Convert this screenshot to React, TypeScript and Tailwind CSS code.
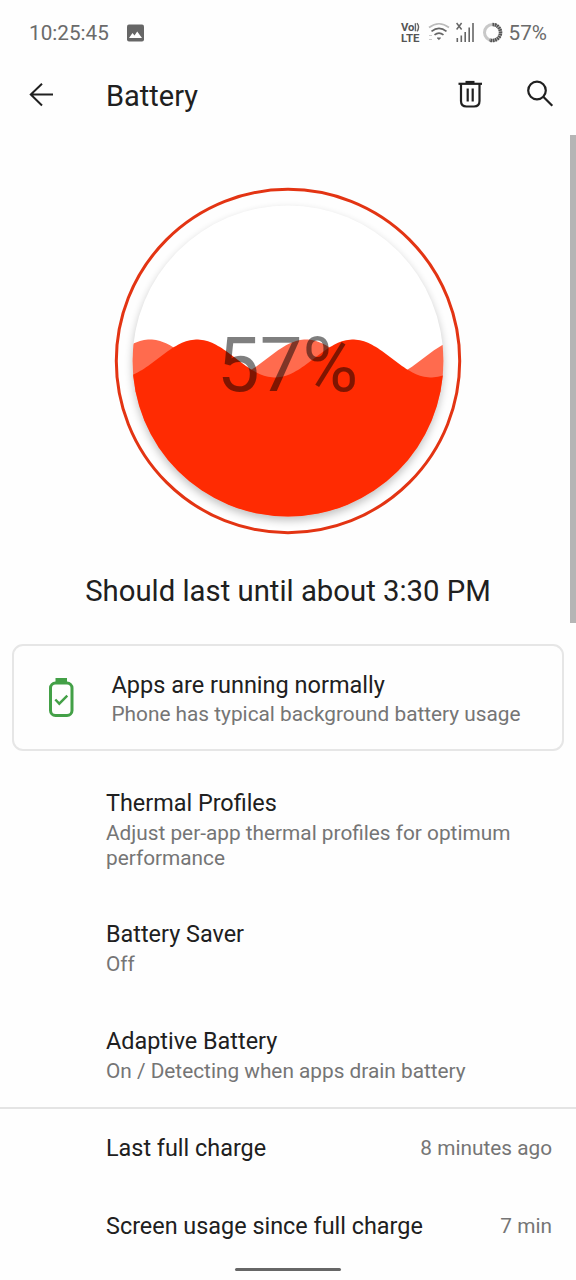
const preferences = [
  { title: "Thermal Profiles", summary: "Adjust per-app thermal profiles for optimum performance", size: "h-[131px]" },
  { title: "Battery Saver", summary: "Off", size: "h-[107px]" },
  { title: "Adaptive Battery", summary: "On / Detecting when apps drain battery", size: "h-[81px]" },
];

const usage = [
  { label: "Last full charge", value: "8 minutes ago" },
  { label: "Screen usage since full charge", value: "7 min" },
];

// one crest every 156px, 19px high on either side of the water line
function wavePath(crest: number) {
  const points: string[] = [];
  for (let x = 128; x <= 448; x += 2) {
    const y = 358.5 - 19 * Math.cos(((x - crest) / 156) * Math.PI * 2);
    points.push(`${x} ${y.toFixed(2)}`);
  }
  return `M${points.join("L")}V520H128Z`;
}

function StatusIcons() {
  return (
    <svg width="106" height="24" viewBox="400 21 106 24" fill="none" stroke="#666">
      <g fill="#555" stroke="none" fontFamily="Roboto, sans-serif" fontWeight="700">
        <text x="401" y="31.3" fontSize="10.5" textLength="13.5" lengthAdjust="spacingAndGlyphs">Vo</text>
        <text x="401" y="41.8" fontSize="11" textLength="18.5" lengthAdjust="spacingAndGlyphs">LTE</text>
      </g>
      <path d="M415.4 23.3v8M417 23.1q3.2 4 0 8.2" strokeWidth="1.4" />
      <g strokeWidth="1.7">
        <path d="M429 27.5q10-7.5 20 0" stroke="#bbb" />
        <path d="M431.5 31.3q7.5-6 15 0" />
        <path d="M434.5 34.9q4.5-3.7 9 0" />
      </g>
      <path d="M437.3 38h3.2l-1.6 1.5z" fill="#666" />
      <path d="M429 35.5h3M429 39.5h3" stroke="#ccc" />
      <path d="M456.6 23l5 6.5M461.6 23l-5 6.5" strokeWidth="1.5" />
      <path d="M457.3 38v4M461.3 35.5v6.5M465.2 32v10M469.2 27.5v14.5M473 23v19" strokeWidth="1.6" />
      <circle cx="492.5" cy="32.5" r="8" stroke="#c8c8c8" strokeWidth="3" />
      <path d="M492.5 24.5a8 8 0 1 1-3 15.4" stroke="#555" strokeWidth="3.6" strokeDasharray="1.7 .6" />
    </svg>
  );
}

function StatusBar() {
  return (
    <div className="flex h-[66px] items-center px-[29px] pt-px text-[#6b6b6b]">
      <span className="w-[80px] text-[20.7px]">10:25:45</span>
      <svg className="ml-[17px]" width="19" height="19" viewBox="0 0 19 19">
        <rect x="1" y="0.5" width="17" height="17" rx="2" fill="#666" />
        <path d="M3 14l3.5-5 2 2.5 2.7-4 4.8 6.5z" fill="#fff" />
      </svg>
      <div className="ml-auto flex items-center">
        <StatusIcons />
        <span className="ml-[3px] text-[20.7px]">57%</span>
      </div>
    </div>
  );
}

function AppBar() {
  return (
    <header className="flex h-[60px] items-center pl-[29px] pr-[22px]">
      <svg className="-mt-[3px]" width="25" height="24" viewBox="0 0 25 24" fill="none" stroke="#202020" strokeWidth="2">
        <path d="M24 11.5H2M13 .8L1.8 11.5 13 22.5" />
      </svg>
      <h1 className="ml-[52px] pt-px text-[29px]">Battery</h1>
      <svg className="-mt-1 ml-auto" width="26" height="28" viewBox="458 80 26 28" fill="none" stroke="#202020" strokeWidth="2.2">
        <path d="M458.5 83.8h23.5" />
        <path d="M465.5 82.2h9" strokeWidth="2.6" />
        <path d="M461 84v17q0 5.5 5.5 5.5h7.5q5.5 0 5.5-5.5V84M467.7 88.5v13M472.7 88.5v13" />
      </svg>
      <svg className="-mt-1 ml-[42px]" width="28" height="28" viewBox="526 80 28 28" fill="none" stroke="#202020" strokeWidth="2.2">
        <circle cx="537" cy="90.5" r="8.8" />
        <path d="M543.3 96.8l9 8.9" />
      </svg>
    </header>
  );
}

function BatteryGauge() {
  return (
    <svg className="mx-auto mt-[54px] block" width="360" height="364" viewBox="108 180 360 364">
      <defs>
        <clipPath id="tank">
          <circle cx="288" cy="361" r="155.5" />
        </clipPath>
        <filter id="drop" x="-10%" y="-10%" width="120%" height="120%">
          <feGaussianBlur stdDeviation="4.5" />
        </filter>
      </defs>
      <circle cx="288" cy="365" r="155.5" fill="#000" opacity=".24" filter="url(#drop)" />
      <circle cx="288" cy="361" r="155.5" fill="#fff" />
      <g clipPath="url(#tank)">
        <path d={wavePath(150)} fill="#ff6b4e" />
        <path d={wavePath(197)} fill="#ff2b02" />
      </g>
      <circle cx="288" cy="361" r="171.7" fill="none" stroke="#e33413" strokeWidth="3" />
      <text x="287.5" y="391" textAnchor="middle" fontSize="76" fontFamily="Roboto, sans-serif" fill="#000" fillOpacity=".5">
        57%
      </text>
    </svg>
  );
}

function StatusCard() {
  return (
    <div className="mx-3 mt-[33px] flex h-[107px] items-center rounded-[11px] border-2 border-[#e6e6e6] pl-[34px]">
      <svg width="26" height="42" viewBox="48 677 26 42" fill="none" stroke="#43a047" strokeWidth="3">
        <path d="M55.5 678h11.5v4h-11.5z" fill="#43a047" stroke="none" />
        <rect x="50.5" y="683" width="21.5" height="32.5" rx="5" />
        <path d="M55.3 699.5l4 4.2 8-8" strokeWidth="2.4" />
      </svg>
      <div className="ml-[37.5px] pt-[4px]">
        <h2 className="text-[23.5px] leading-[30px]">Apps are running normally</h2>
        <p className="text-[20.8px] leading-[29px] text-[#757575]">Phone has typical background battery usage</p>
      </div>
    </div>
  );
}

export default function App() {
  return (
    <div className="relative h-[1280px] w-[576px] overflow-hidden bg-[#fefefe] font-[Roboto,sans-serif] text-[#202020]">
      <StatusBar />
      <AppBar />
      <BatteryGauge />
      <p className="mt-[27px] text-center text-[29.3px] leading-10">Should last until about 3:30 PM</p>
      <StatusCard />

      <section className="pt-[37px]">
        {preferences.map((item) => (
          <div key={item.title} className={`${item.size} pl-[106px] pr-[50px]`}>
            <h2 className="text-[23.4px] leading-[30px]">{item.title}</h2>
            <p className="pt-[3px] text-[20.8px] leading-[24.5px] text-[#757575]">{item.summary}</p>
          </div>
        ))}
      </section>

      <section className="border-t-2 border-[#e4e4e4] pt-px">
        {usage.map((row) => (
          <div key={row.label} className="flex h-[78px] items-center justify-between pl-[106px] pr-6">
            <span className="text-[23.4px]">{row.label}</span>
            <span className="text-[20.8px] text-[#757575]">{row.value}</span>
          </div>
        ))}
      </section>

      <div className="absolute right-0 top-[135px] h-[488px] w-[6px] bg-[#b5b5b5]" />
      <div className="absolute bottom-[9px] left-[235px] h-[3px] w-[106px] rounded-full bg-[#666]" />
    </div>
  );
}
